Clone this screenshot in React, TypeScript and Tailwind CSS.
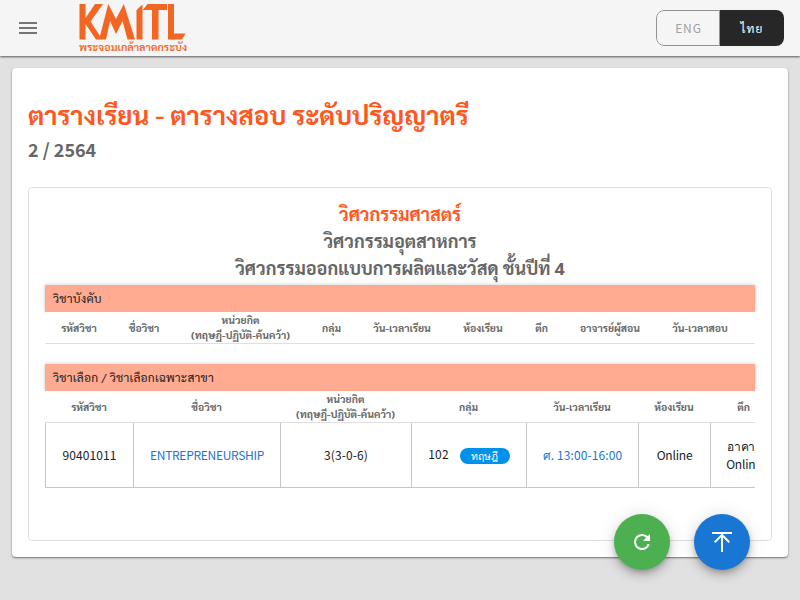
import React from 'react';

type Cell = { text: React.ReactNode; cls: string };

function Band({ children }: { children: React.ReactNode }) {
  return (
    <div className="h-[27px] bg-[#ffab91] pl-2 text-[12px] leading-[27px] tracking-[0.2px] text-[#212121] shadow-[0_0_4px_rgba(0,0,0,0.22)]">
      {children}
    </div>
  );
}

function HeadRow({ cells }: { cells: Cell[] }) {
  return (
    <div className="flex h-8 w-max min-w-full border-b border-[#dfdfdf] bg-white text-[10.4px] font-bold leading-[15px] text-[#666]">
      {cells.map((c, i) => (
        <div key={i} className={'flex shrink-0 items-center justify-center whitespace-nowrap text-center ' + c.cls}>
          <span>{c.text}</span>
        </div>
      ))}
    </div>
  );
}

const credit = (
  <span className="block pb-[2px]">
    หน่วยกิต
    <br />
    (ทฤษฎี-ปฏิบัติ-ค้นคว้า)
  </span>
);

const required: Cell[] = [
  { text: 'รหัสวิชา', cls: 'w-[68px]' },
  { text: 'ชื่อวิชา', cls: 'w-[62px]' },
  { text: credit, cls: 'w-[131px]' },
  { text: 'กลุ่ม', cls: 'w-[51px]' },
  { text: 'วัน-เวลาเรียน', cls: 'w-[90px]' },
  { text: 'ห้องเรียน', cls: 'w-[72px]' },
  { text: 'ตึก', cls: 'w-[45px]' },
  { text: 'อาจารย์ผู้สอน', cls: 'w-[92px]' },
  { text: 'วัน-เวลาสอบ', cls: 'w-[88px]' },
];

const elective: Cell[] = [
  { text: 'รหัสวิชา', cls: 'w-[88px]' },
  { text: 'ชื่อวิชา', cls: 'w-[147px]' },
  { text: credit, cls: 'w-[131px]' },
  { text: 'กลุ่ม', cls: 'w-[115px]' },
  { text: 'วัน-เวลาเรียน', cls: 'w-[112px]' },
  { text: 'ห้องเรียน', cls: 'w-[72px]' },
  { text: 'ตึก', cls: 'w-[67px]' },
];

const row: Cell[] = [
  { text: '90401011', cls: 'w-[89px] border-l' },
  { text: <span className="tracking-[-0.3px] text-[#1976d2]">ENTREPRENEURSHIP</span>, cls: 'w-[147px]' },
  { text: '3(3-0-6)', cls: 'w-[131px]' },
  {
    text: (
      <span className="flex items-center gap-[11px]">
        <span className="pb-[2px]">102</span>
        <span className="mt-px h-4 w-[50px] rounded-full bg-[#0091ea] text-center font-['Noto_Sans',sans-serif] text-[10.4px] leading-4 tracking-normal text-white">ทฤษฎี</span>
      </span>
    ),
    cls: 'w-[115px]',
  },
  { text: <span className="text-[#1976d2]">ศ. 13:00-16:00</span>, cls: 'w-[112px]' },
  { text: <span className="tracking-[-0.2px]">Online</span>, cls: 'w-[72px]' },
  { text: <span className="tracking-[-0.2px]">อาคาร<br />Online</span>, cls: 'w-[67px]' },
];

export default function App() {
  return (
    <div className="relative flex h-[600px] w-[800px] flex-col overflow-hidden bg-[#e1e1e1] font-['Sarabun','Noto_Sans_Thai','Noto_Sans',sans-serif]">
      <header className="flex h-14 shrink-0 items-center bg-[#f5f5f5] pl-4 pr-4 shadow-[0_1px_2px_rgba(0,0,0,0.6)]">
        <svg width="24" height="24" viewBox="0 0 24 24" fill="#757575">
          <path d="M3 18h18v-2H3v2zm0-5h18v-2H3v2zm0-7v2h18V6H3z" />
        </svg>
        <div className="ml-[39px] w-[110px]">
          <svg className="block" width="108" height="36" viewBox="0 0 108 36" fill="#f26522">
            <path d="M0.5 0H6.5V14L16 0H24L11.5 17.5L21 32L29.3 0L37 15L44.8 0L56 35.5H48.5L43.5 17L37 30L31 17L27 35.5H17L6.5 20V35.5H0.5Z" />
            <path d="M57.5 6L63.5 0.5V35.5H57.5Z M63.8 6L68.5 0H88V6H79.5V35.5H73V6Z M89 0H95V29.5H106.5L103 35.5H89Z" />
          </svg>
          <div className="mt-[1px] h-3 whitespace-nowrap text-[10.8px] font-semibold leading-3 text-[#f26522]">พระจอมเกล้าลาดกระบัง</div>
        </div>
        <div className="ml-auto flex h-9 w-32 overflow-hidden rounded-[8px] text-[12px] tracking-[1.07px]">
          <div className="flex w-16 items-center justify-center rounded-l-[8px] border border-[#929292] pl-px font-['Noto_Sans_CJK_JP',sans-serif] leading-4 tracking-[0.9px] text-[#a0a0a0]">ENG</div>
          <div className="flex w-16 items-center justify-center bg-[#272727] text-white">ไทย</div>
        </div>
      </header>

      <main className="mx-3 mt-3 flex h-[489px] flex-col rounded bg-white px-4 pt-[26px] shadow-[0_1px_2px_rgba(0,0,0,0.5)]">
        <h1 className="h-[42px] whitespace-nowrap text-[25.9px] font-bold leading-10 text-[#ff5722]">ตารางเรียน - ตารางสอบ ระดับปริญญาตรี</h1>
        <h2 className="h-7 font-['Noto_Sans_CJK_JP',sans-serif] text-[18px] font-bold leading-[26px] text-[#666]">2 / 2564</h2>
        <section className="mt-[23px] h-[354px] rounded border border-[#dfdfdf] px-4 pt-3">
          <div className="text-center text-[18px] font-bold leading-[27px] text-[#666]">
            <div className="text-[#ff5722]">วิศวกรรมศาสตร์</div>
            <div>วิศวกรรมอุตสาหการ</div>
            <div>วิศวกรรมออกแบบการผลิตและวัสดุ ชั้นปีที่ 4</div>
          </div>
          <div className="mt-1">
            <Band>วิชาบังคับ</Band>
            <HeadRow cells={required} />
          </div>
          <div className="mt-5">
            <Band>วิชาเลือก / วิชาเลือกเฉพาะสาขา</Band>
            <div className="overflow-hidden">
              <HeadRow cells={elective} />
              <div className="flex h-[65px] w-max font-['Noto_Sans_CJK_JP','Noto_Sans',sans-serif] text-[12px] leading-[18px] tracking-[0.1px] text-[#212121]">
                {row.map((c, i) => (
                  <div key={i} className={'flex shrink-0 items-center justify-center whitespace-nowrap border-b border-r border-[#c6c6c6] text-center ' + c.cls}>
                    <div>{c.text}</div>
                  </div>
                ))}
              </div>
            </div>
          </div>
        </section>
      </main>

      <div className="absolute left-[614px] top-[514px] flex gap-6">
        <button className="flex size-14 items-center justify-center rounded-full bg-[#4caf50] shadow-[0_3px_5px_-1px_rgba(0,0,0,0.2),0_6px_10px_rgba(0,0,0,0.14),0_1px_18px_rgba(0,0,0,0.12)]">
          <svg width="24" height="24" viewBox="0 0 24 24" fill="white">
            <path d="M17.65 6.35C16.2 4.9 14.21 4 12 4a8 8 0 1 0 7.73 10h-2.08A6 6 0 1 1 12 6c1.66 0 3.14.69 4.22 1.78L13 11h7V4l-2.35 2.35z" />
          </svg>
        </button>
        <button className="flex size-14 items-center justify-center rounded-full bg-[#1976d2] shadow-[0_3px_5px_-1px_rgba(0,0,0,0.2),0_6px_10px_rgba(0,0,0,0.14),0_1px_18px_rgba(0,0,0,0.12)]">
          <svg width="24" height="24" viewBox="0 0 24 24" fill="none" stroke="white" strokeWidth="2">
            <path d="M2 3H22M12 5V22M4.7 12.3L12 5L19.3 12.3" />
          </svg>
        </button>
      </div>
    </div>
  );
}
